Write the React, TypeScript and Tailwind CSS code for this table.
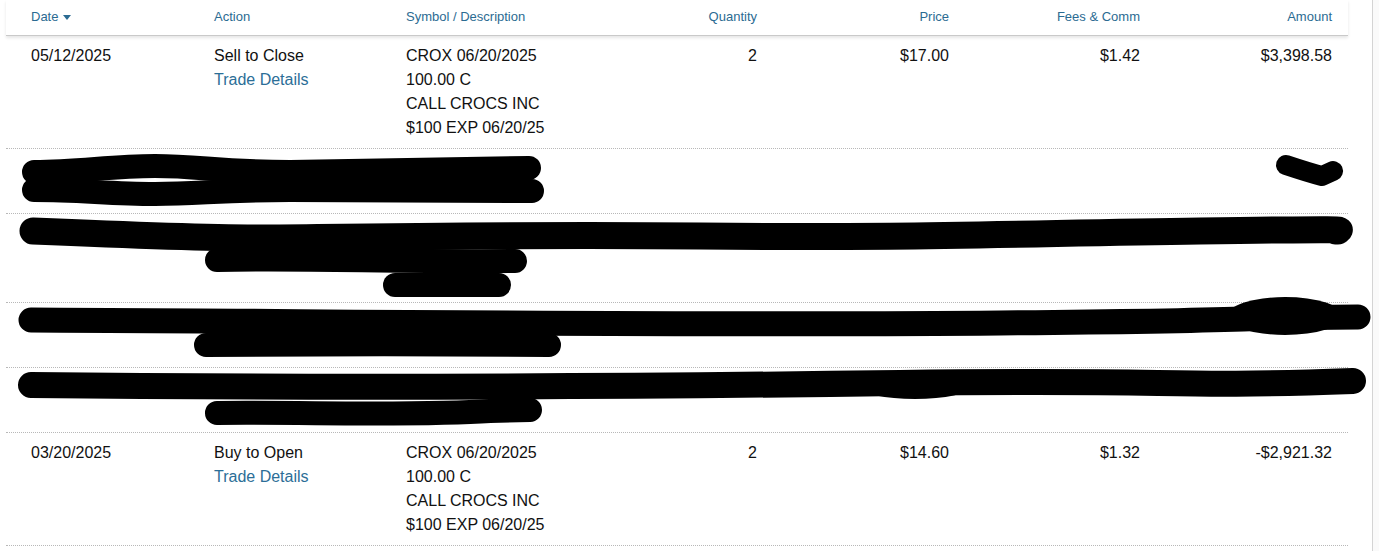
import React from 'react';

type Trade = {
  date: string;
  action: string;
  symbol: string[];
  qty: string;
  price: string;
  fees: string;
  amount: string;
};

const trades: (Trade | number)[] = [
  {
    date: '05/12/2025',
    action: 'Sell to Close',
    symbol: ['CROX 06/20/2025', '100.00 C', 'CALL CROCS INC', '$100 EXP 06/20/25'],
    qty: '2',
    price: '$17.00',
    fees: '$1.42',
    amount: '$3,398.58',
  },
  2,
  3,
  2,
  2,
  {
    date: '03/20/2025',
    action: 'Buy to Open',
    symbol: ['CROX 06/20/2025', '100.00 C', 'CALL CROCS INC', '$100 EXP 06/20/25'],
    qty: '2',
    price: '$14.60',
    fees: '$1.32',
    amount: '-$2,921.32',
  },
];

const cols = 'grid grid-cols-[208px_192px_159px_192px_192px_191px_192px_16px]';

const Header = () => (
  <div
    className={`${cols} h-[36px] border-b border-[#c9c9c9] shadow-[0_2px_3px_rgba(0,0,0,0.10)] text-[13px] leading-[16px] text-[#2b6b92] pt-[9px]`}
  >
    <div className="pl-[25px] flex items-start gap-[5px]">
      <span>Date</span>
      <svg width="8" height="6" viewBox="0 0 8 6" className="mt-[6px]">
        <path d="M0 0 L8 0 L4 5 Z" fill="#2b6b92" />
      </svg>
    </div>
    <div>Action</div>
    <div>Symbol / Description</div>
    <div className="text-right">Quantity</div>
    <div className="text-right">Price</div>
    <div className="text-right">Fees &amp; Comm</div>
    <div className="text-right">Amount</div>
    <div />
  </div>
);

const Row = ({ t }: { t: Trade }) => (
  <div className={`${cols} pt-[8px] pb-[8px] border-b border-dotted border-[#b8b8b8] text-[16px] leading-[24px] text-[#111]`}>
    <div className="pl-[25px]">{t.date}</div>
    <div>
      <div>{t.action}</div>
      <div className="text-[#2c6e97]">Trade Details</div>
    </div>
    <div className="whitespace-nowrap">
      {t.symbol.map((s) => (
        <div key={s}>{s}</div>
      ))}
    </div>
    <div className="text-right">{t.qty}</div>
    <div className="text-right">{t.price}</div>
    <div className="text-right">{t.fees}</div>
    <div className="text-right">{t.amount}</div>
    <div />
  </div>
);

const BlankRow = ({ lines }: { lines: number }) => (
  <div className="pt-[8px] pb-[8px] border-b border-dotted border-[#b8b8b8] text-[16px] leading-[24px]">
    {Array.from({ length: lines }).map((_, i) => (
      <div key={i}>&nbsp;</div>
    ))}
  </div>
);

// redaction marker strokes drawn over the hidden rows
const Scribbles = () => (
  <svg
    className="absolute inset-0 pointer-events-none"
    width="1379"
    height="551"
    viewBox="0 0 1379 551"
    fill="none"
    stroke="#000"
    strokeLinecap="round"
    strokeLinejoin="round"
  >
    <path d="M34 172 C80 172 110 166 155 166 S220 172 290 172 L529 168" strokeWidth="24" />
    <path d="M34 190 C80 190 110 194 155 194 S220 190 290 190 L532 191" strokeWidth="24" />
    <path d="M1286 165 Q1310 173 1322 176 L1333 171" strokeWidth="20" />

    <path d="M33 231 C150 236 220 238 260 238 S500 234 700 236 S1000 234 1200 231 S1320 231 1338 231" strokeWidth="27" />
    <path d="M217 260 C300 258 400 262 515 261" strokeWidth="24" />
    <path d="M395 285 L499 285" strokeWidth="24" />

    <path d="M31 320 C300 321 700 326 1000 323 S1200 318 1358 317" strokeWidth="25" />
    <ellipse cx="1285" cy="316" rx="58" ry="19" fill="#000" stroke="none" />
    <path d="M206 345 C300 344 450 344 549 345" strokeWidth="24" />

    <path d="M31 385 C300 388 600 387 900 383 S1150 388 1353 381" strokeWidth="26" />
    <ellipse cx="915" cy="387" rx="55" ry="12" fill="#000" stroke="none" />
    <path d="M217 413 C300 412 420 416 490 411 L530 410" strokeWidth="24" />
  </svg>
);

export default function App() {
  return (
    <div
      className="relative w-[1379px] h-[551px] bg-white overflow-hidden flex"
      style={{ fontFamily: '"Liberation Sans", Arial, sans-serif' }}
    >
      <div className="w-[1372px] shrink-0">
        <div className="ml-[6px] w-[1342px]">
          <Header />
          {trades.map((t, i) =>
            typeof t === 'number' ? <BlankRow key={i} lines={t} /> : <Row key={i} t={t} />
          )}
        </div>
      </div>
      <div className="flex-1 border-l border-[#d4d4d4] bg-[#fafafa]" />
      <Scribbles />
    </div>
  );
}
